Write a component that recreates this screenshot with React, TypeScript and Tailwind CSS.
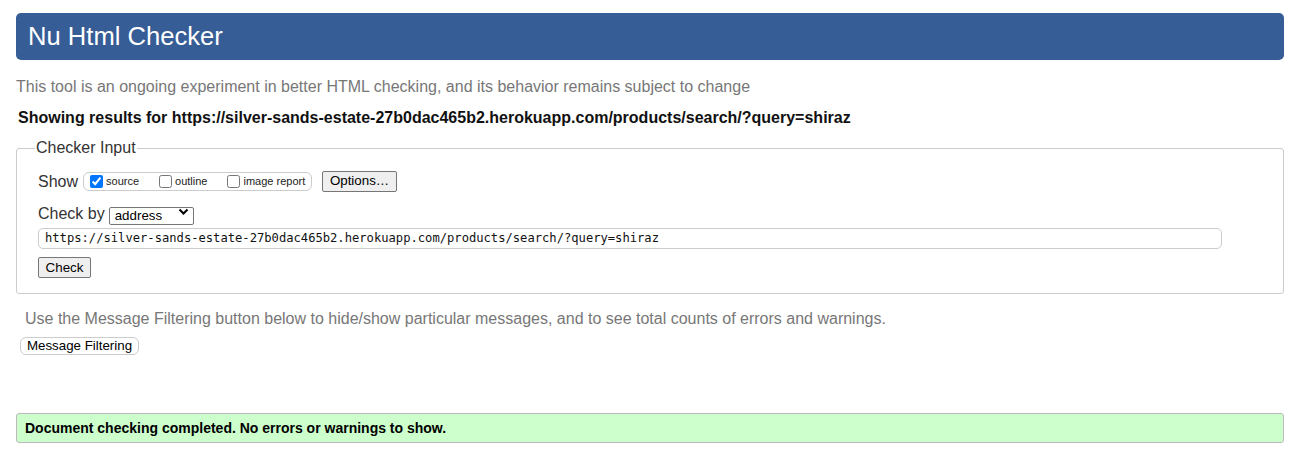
import React from "react";

export default function App() {
  const url =
    "https://silver-sands-estate-27b0dac465b2.herokuapp.com/products/search/?query=shiraz";
  return (
    <div className="min-h-[450px] w-full bg-white pl-[16px] pr-[9px] pt-[13px] pb-[8px] font-['Liberation_Sans',Arial,sans-serif] text-[#222]">
      <header className="flex h-[47px] items-center rounded-[5px] bg-[#365d95] pl-[12px]">
        <h1 className="text-[25.6px] leading-none text-white">Nu Html Checker</h1>
      </header>

      <p className="mt-[18px] text-[16px] leading-[18px] text-[#777]">
        This tool is an ongoing experiment in better HTML checking, and its behavior remains subject to change
      </p>

      <p className="mt-[13px] pl-[2px] text-[16px] font-bold leading-[18px] text-[#111]">
        Showing results for {url}
      </p>

      <fieldset className="mt-[12px] rounded-[3px] border border-[#ccc] pb-[15px] pl-[21px] pr-[20px]">
        <legend className="-ml-[3px] px-[1px] text-[16px] leading-[18px] text-[#333]">Checker Input</legend>

        <div className="mt-[13px] flex h-[22px] items-center">
          <span className="pt-[2px] text-[16px] leading-[18px] text-[#333]">Show</span>
          <div className="ml-[5px] flex h-[19px] w-[229px] items-center rounded-[6px] border border-[#ccc] pl-[6px]">
            <label className="flex items-center">
              <input type="checkbox" defaultChecked className="m-0 h-[13px] w-[13px]" />
              <span className="ml-[3px] text-[11px] leading-none text-[#222]">source</span>
            </label>
            <label className="ml-[20px] flex items-center">
              <input type="checkbox" className="m-0 h-[13px] w-[13px]" />
              <span className="ml-[3px] text-[11px] leading-none text-[#222]">outline</span>
            </label>
            <label className="ml-[20px] flex items-center">
              <input type="checkbox" className="m-0 h-[13px] w-[13px]" />
              <span className="ml-[3px] text-[11px] leading-none text-[#222]">image report</span>
            </label>
          </div>
          <button className="ml-[10px] flex h-[21px] w-[75px] items-center justify-center rounded-[2px] border border-[#767676] bg-[#efefef] text-[13.33px] leading-none text-black">
            Options…
          </button>
        </div>

        <div className="mt-[10px] flex h-[20px] items-center">
          <span className="pt-[4px] text-[16px] leading-[18px] text-[#333]">Check by</span>
          <div className="relative ml-[4px] h-[18px] w-[85px]">
            <select className="h-[18px] w-[85px] appearance-none rounded-[2px] border border-[#767676] bg-white pl-[5px] text-[13.33px] leading-none text-black">
              <option>address</option>
            </select>
            <svg
              className="pointer-events-none absolute right-[5px] top-[5px]"
              width="11"
              height="8"
              viewBox="0 0 11 8"
            >
              <path d="M1.5 1.5 L5.5 5.5 L9.5 1.5" fill="none" stroke="#000" strokeWidth="2" />
            </svg>
          </div>
        </div>

        <div className="mt-[3px]">
          <input
            type="text"
            defaultValue={url}
            className="h-[21px] w-[1184px] rounded-[5px] border border-[#ccc] bg-white px-[6px] font-['DejaVu_Sans_Mono','Liberation_Mono',monospace] text-[12.15px] leading-none text-[#111] outline-none"
          />
        </div>

        <div className="mt-[8px]">
          <button className="flex h-[21px] w-[53px] items-center justify-center rounded-[2px] border border-[#767676] bg-[#efefef] text-[13.33px] leading-none text-black">
            Check
          </button>
        </div>
      </fieldset>

      <p className="mt-[16px] pl-[9px] text-[16px] leading-[18px] text-[#777]">
        Use the Message Filtering button below to hide/show particular messages, and to see total counts of errors and warnings.
      </p>

      <div className="mt-[9px] pl-[4px]">
        <button className="flex h-[18px] w-[119px] items-center justify-center rounded-[6px] border border-[#ccc] bg-white text-[13.33px] leading-none text-black">
          Message Filtering
        </button>
      </div>

      <div className="mt-[58px] flex h-[30px] items-center rounded-[3px] border border-[#bbb] bg-[#ccffcc] pl-[8px]">
        <p className="text-[14px] font-bold leading-none text-black">
          Document checking completed. No errors or warnings to show.
        </p>
      </div>
    </div>
  );
}
